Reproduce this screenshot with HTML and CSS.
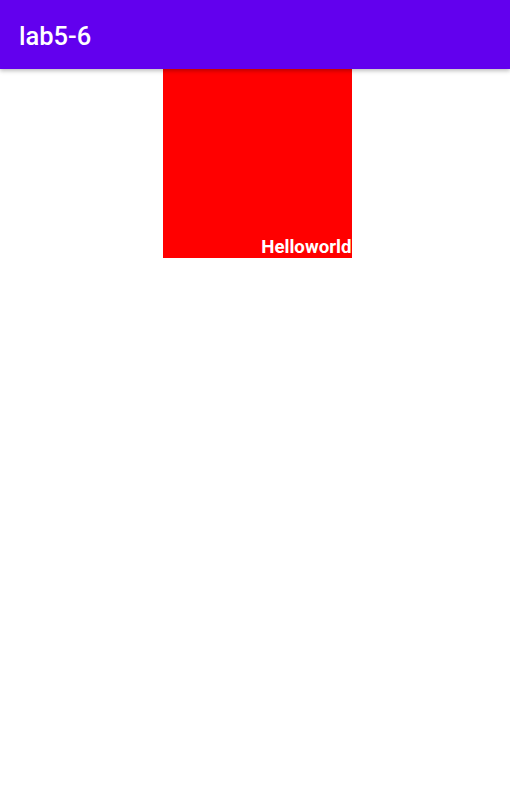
FILE: index.html
```html
<!DOCTYPE html>
<html>
<head>
<meta charset="utf-8">
<link rel="stylesheet" href="styles.css">
</head>
<body>
<header class="toolbar"><span class="title">lab5-6</span></header>
<main class="content">
  <div class="box"><span class="label">Helloworld</span></div>
</main>
</body>
</html>
```
FILE: styles.css
```css
html, body { margin: 0; padding: 0; background: #fff; }
body { font-family: Roboto, "Noto Sans", sans-serif; }
.toolbar {
  box-sizing: border-box;
  height: 69px;
  background: #6200EE;
  display: flex;
  align-items: center;
  padding: 2px 0 0 19px;
  box-shadow: 0 2px 4px rgba(0,0,0,0.25);
  position: relative;
  z-index: 1;
}
.title { color: #fff; font-size: 25.5px; font-weight: 500; }
.content { display: flex; justify-content: center; padding-left: 4px; }
.box {
  width: 189px;
  height: 189px;
  background: #ff0000;
  display: flex;
  justify-content: flex-end;
  align-items: flex-end;
}
.label { color: #fff; font-size: 18.7px; font-weight: 700; line-height: 22px; }
```
